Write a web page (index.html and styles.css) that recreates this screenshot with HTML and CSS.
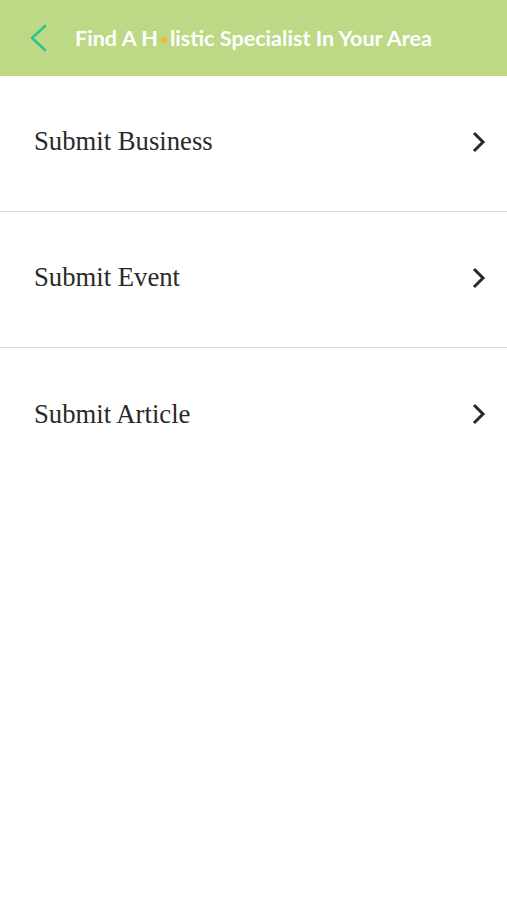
FILE: index.html
```html
<!DOCTYPE html>
<html>
<head>
<meta charset="utf-8">
<link rel="stylesheet" href="styles.css">
</head>
<body>
<header class="topbar">
  <svg class="back" width="20" height="28" viewBox="0 0 20 28"><path d="M17 2 L4 14 L17 26" fill="none" stroke="#2cc68c" stroke-width="2.6" stroke-linecap="round" stroke-linejoin="round"/></svg>
  <h1 class="title">Find A H<span class="dot-o">o</span>listic Specialist In Your Area</h1>
</header>
<ul class="menu">
  <li class="item"><span class="label">Submit Business</span><svg class="chev" width="16" height="24" viewBox="0 0 16 24"><path d="M3 3 L12 12 L3 21" fill="none" stroke="#2a2a2a" stroke-width="3" stroke-linejoin="miter"/></svg></li>
  <li class="item"><span class="label">Submit Event</span><svg class="chev" width="16" height="24" viewBox="0 0 16 24"><path d="M3 3 L12 12 L3 21" fill="none" stroke="#2a2a2a" stroke-width="3" stroke-linejoin="miter"/></svg></li>
  <li class="item last"><span class="label">Submit Article</span><svg class="chev" width="16" height="24" viewBox="0 0 16 24"><path d="M3 3 L12 12 L3 21" fill="none" stroke="#2a2a2a" stroke-width="3" stroke-linejoin="miter"/></svg></li>
</ul>
</body>
</html>
```
FILE: styles.css
```css
html, body { margin: 0; padding: 0; background: #fff; }
.topbar {
  height: 76px;
  background: #bdd986;
  display: flex;
  align-items: center;
  padding-left: 28px;
  box-sizing: border-box;
}
.back { display: block; margin-right: 27px; }
.title {
  margin: 0;
  font-family: Lato, "Open Sans", sans-serif;
  font-weight: 700;
  font-size: 21.6px;
  color: #fff;
  white-space: nowrap;
}
.dot-o {
  color: transparent;
  position: relative;
}
.dot-o::after {
  content: "";
  position: absolute;
  left: 50%;
  top: 50%;
  width: 6px;
  height: 6px;
  margin-left: -3px;
  margin-top: -1px;
  border-radius: 50%;
  background: #f3b531;
}
.menu { list-style: none; margin: 0; padding: 0; }
.item {
  height: 136px;
  box-sizing: border-box;
  border-bottom: 1px solid #dcdcdc;
  display: flex;
  align-items: center;
  justify-content: space-between;
  padding: 0 20px 4px 34px;
}
.item.last { border-bottom: none; }
.label {
  font-family: "Liberation Serif", "Times New Roman", serif;
  font-size: 26.7px;
  color: #2a2a2a;
}
.chev { display: block; }
```
